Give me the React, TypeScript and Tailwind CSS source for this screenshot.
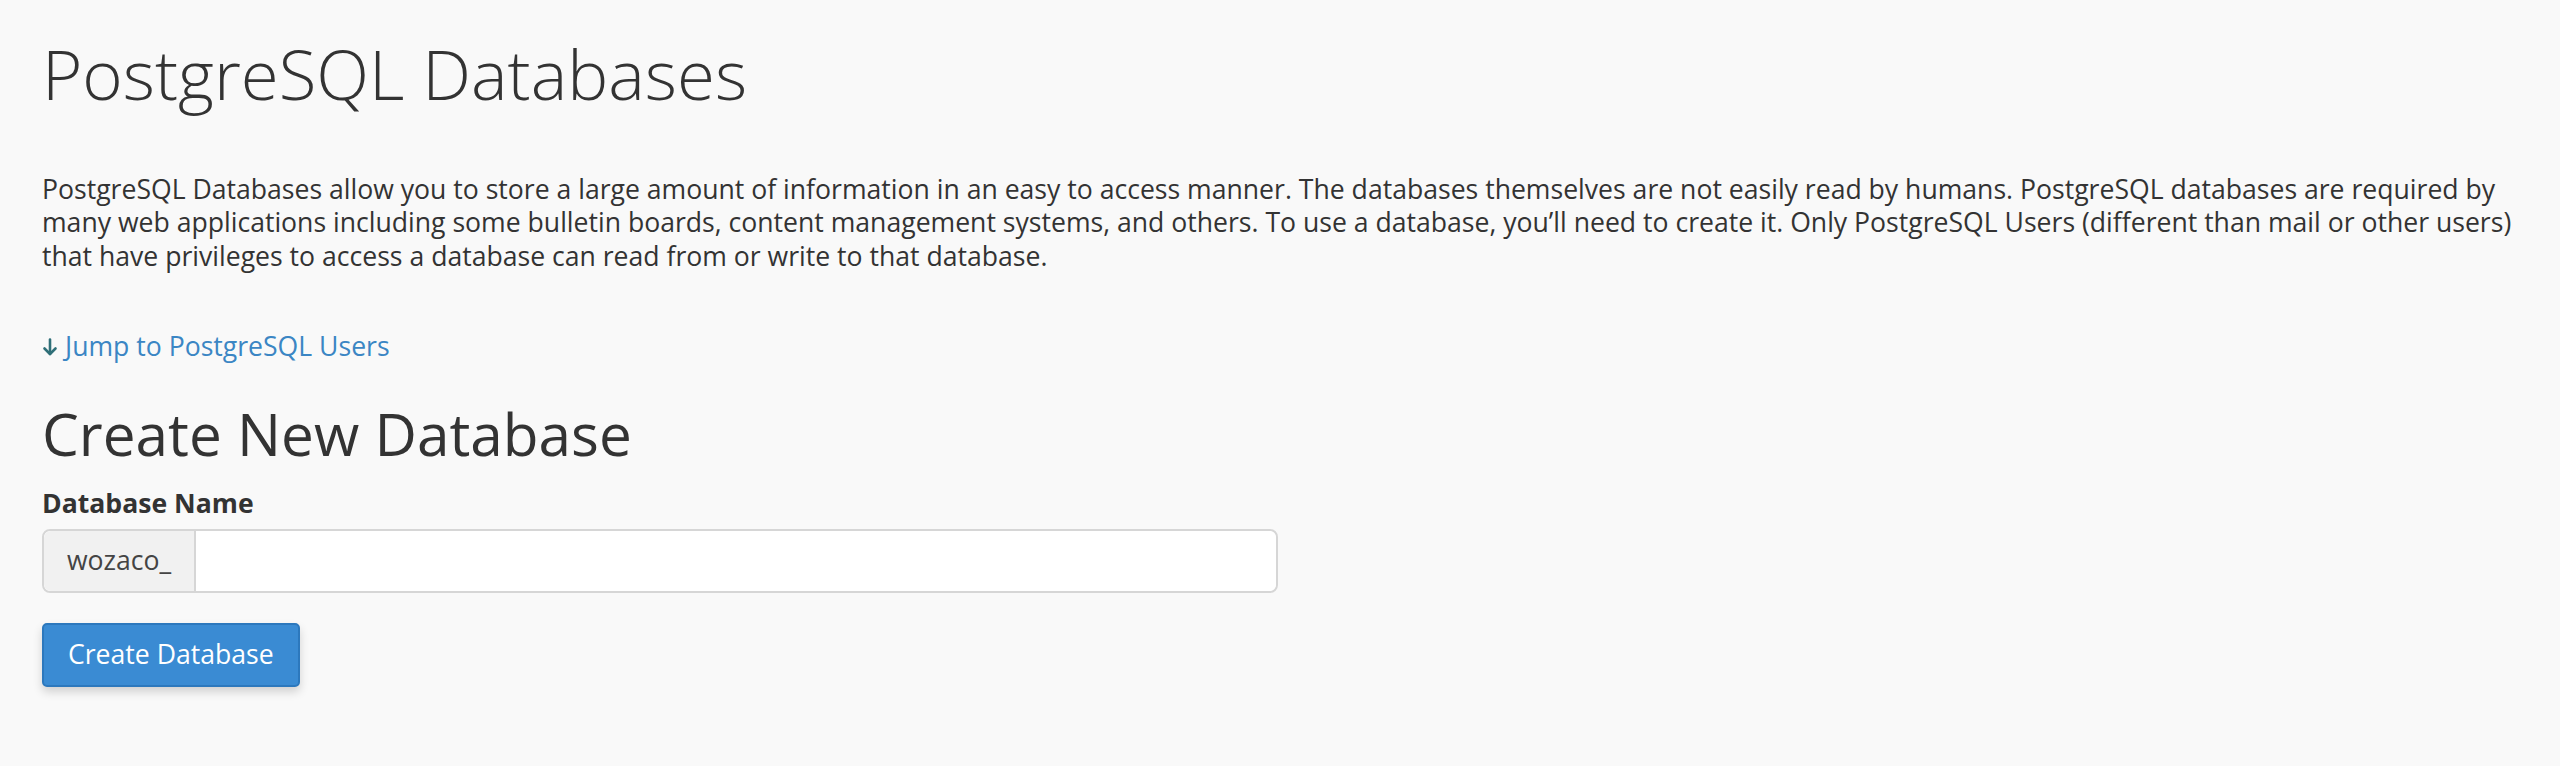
import React from "react";

function ArrowDown() {
  return (
    <svg
      viewBox="0 0 16 18"
      className="h-[18px] w-[16px] text-[#2f6f78]"
      fill="none"
      stroke="currentColor"
      strokeWidth={2.6}
      strokeLinecap="round"
      strokeLinejoin="round"
    >
      <path d="M8 1.5v14.5" />
      <path d="M2.5 10.5L8 16l5.5-5.5" />
    </svg>
  );
}

export default function App() {
  return (
    <div className="min-h-[766px] w-full bg-[#f9f9f9] font-['Open_Sans',sans-serif] text-[#333]">
      <div className="px-[42px] pt-[36px]">
        <h1 className="text-[69px] font-light leading-[1.1] text-[#333]">
          PostgreSQL Databases
        </h1>

        <p className="mt-[61px] whitespace-nowrap text-[26.6px] leading-[33.5px]">
          PostgreSQL Databases allow you to store a large amount of information in an easy to access manner. The databases themselves are not easily read by humans. PostgreSQL databases are required by
          <br />
          many web applications including some bulletin boards, content management systems, and others. To use a database, you’ll need to create it. Only PostgreSQL Users (different than mail or other users)
          <br />
          that have privileges to access a database can read from or write to that database.
        </p>

        <a
          href="#users"
          className="mt-[57px] flex items-center gap-[7px] text-[26.6px] leading-[33.5px] text-[#3b86c4]"
        >
          <ArrowDown />
          <span>Jump to PostgreSQL Users</span>
        </a>

        <h2 className="mt-[37px] text-[58.5px] font-normal leading-[1.1] text-[#333]">
          Create New Database
        </h2>

        <label className="mt-[22px] block text-[26.6px] font-bold leading-[33.5px]">
          Database Name
        </label>

        <div className="mt-[8px] flex h-[64px] w-[1236px] rounded-[8px] border-2 border-[#d6d6d6] bg-white">
          <span className="flex items-center rounded-l-[7px] border-r-2 border-[#d6d6d6] bg-[#f1f1f1] px-[23px] text-[26.6px] text-[#444]">
            wozaco_
          </span>
          <input className="flex-1 rounded-r-[7px] bg-white px-[20px] text-[26.6px] outline-none" />
        </div>

        <button className="mt-[30px] h-[64px] rounded-[5px] border-2 border-[#2c78bd] bg-[#3a8bd3] px-[24px] text-[26.6px] text-white shadow-[0_5px_10px_rgba(0,0,0,0.16)]">
          Create Database
        </button>
      </div>
    </div>
  );
}
